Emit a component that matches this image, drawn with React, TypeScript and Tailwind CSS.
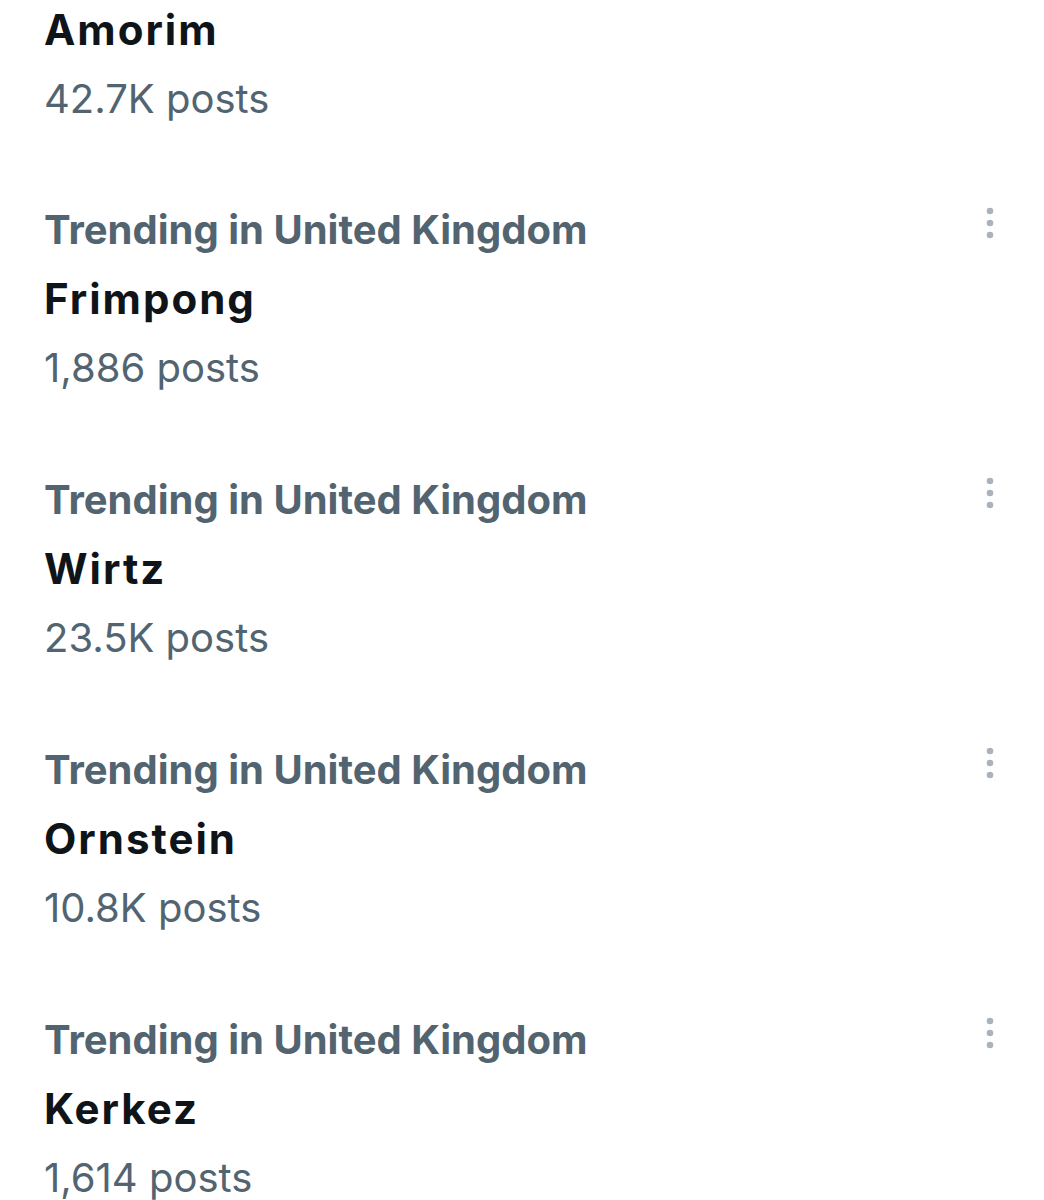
interface Trend {
  name: string
  posts: string
}

const trends: Trend[] = [
  { name: 'Frimpong', posts: '1,886 posts' },
  { name: 'Wirtz', posts: '23.5K posts' },
  { name: 'Ornstein', posts: '10.8K posts' },
  { name: 'Kerkez', posts: '1,614 posts' },
]

function Dots() {
  return (
    <svg width="12" height="34" viewBox="0 0 12 34" className="text-[#aab3bb]">
      <circle cx="6" cy="5" r="3.3" fill="currentColor" />
      <circle cx="6" cy="17" r="3.3" fill="currentColor" />
      <circle cx="6" cy="29" r="3.3" fill="currentColor" />
    </svg>
  )
}

function TrendRow({ trend }: { trend: Trend }) {
  return (
    <div className="flex justify-between pr-[48px]">
      <div>
        <p className="text-[40px] leading-[73px] font-bold text-[#536471]">
          Trending in United Kingdom
        </p>
        <p className="text-[42px] leading-[66px] font-bold text-[#0f1419] tracking-[2px]">{trend.name}</p>
        <p className="text-[40px] leading-[66px] text-[#536471] pt-[3px]">{trend.posts}</p>
      </div>
      <div className="pt-[13px]">
        <Dots />
      </div>
    </div>
  )
}

export default function App() {
  return (
    <div className="w-[1044px] h-[1200px] overflow-hidden bg-white" style={{ fontFamily: 'Inter, "Noto Sans", sans-serif' }}>
      <div className="pl-[44px] -mt-[3px]">
        {/* Previous trend, cut off at top */}
        <div className="pr-[48px]">
          <p className="text-[42px] leading-[66px] font-bold text-[#0f1419] tracking-[2px]">Amorim</p>
          <p className="text-[40px] leading-[66px] text-[#536471] pt-[3px]">42.7K posts</p>
        </div>

        <div className="flex flex-col gap-[62px] pt-[61px]">
          {trends.map(t => (
            <TrendRow key={t.name} trend={t} />
          ))}
        </div>
      </div>
    </div>
  )
}
